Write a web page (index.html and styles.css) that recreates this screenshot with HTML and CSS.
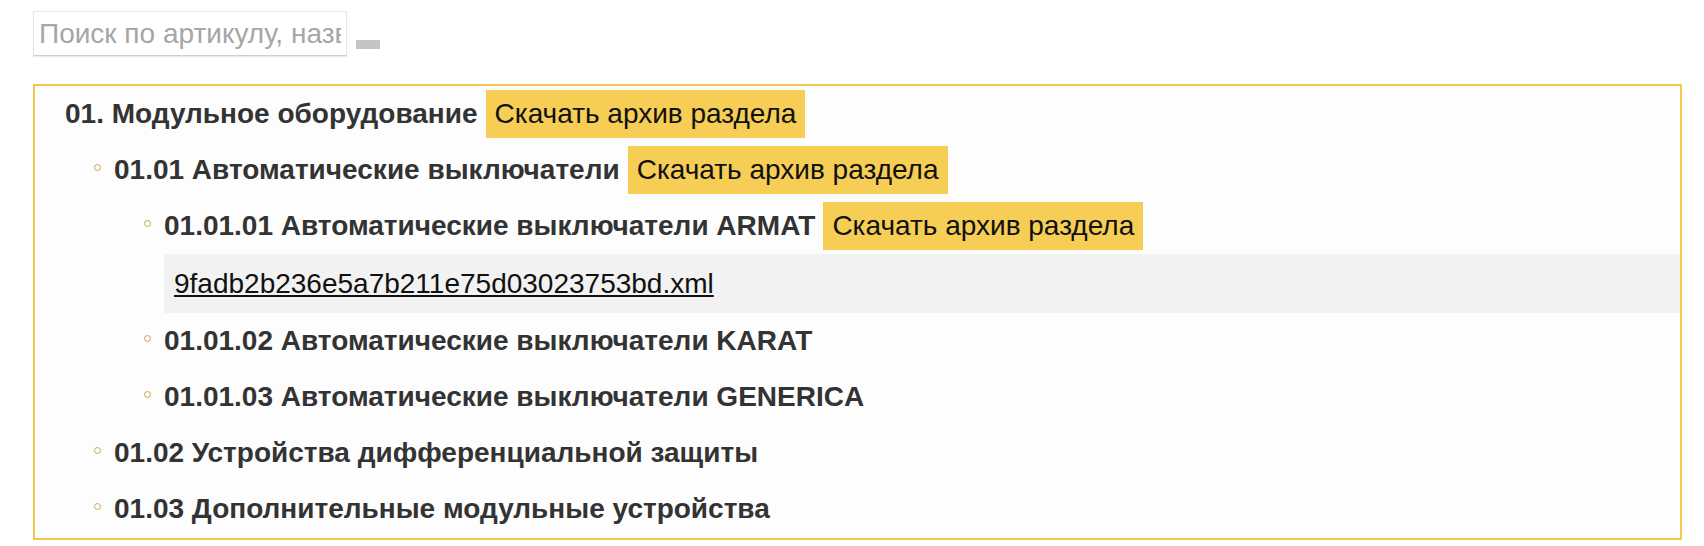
FILE: index.html
```html
<!DOCTYPE html>
<html lang="ru">
<head>
    <meta charset="UTF-8">
    <meta name="viewport" content="width=device-width, initial-scale=1.0">
    <title>Каталог</title>
    <link rel="stylesheet" href="styles.css">
</head>
<body>

<form class="search">
    <input type="text" placeholder="Поиск по артикулу, названию">
    <button type="submit"></button>
</form>

<div class="tree">
    <div class="row level-1">
        <span class="name">01. Модульное оборудование</span>
        <a class="archive" href="#">Скачать архив раздела</a>
    </div>
    <ul class="sub level-2">
        <li>
            <div class="row">
                <i class="dot"></i>
                <span class="name">01.01 Автоматические выключатели</span>
                <a class="archive" href="#">Скачать архив раздела</a>
            </div>
            <ul class="sub level-3">
                <li>
                    <div class="row">
                        <i class="dot"></i>
                        <span class="name">01.01.01 Автоматические выключатели ARMAT</span>
                        <a class="archive" href="#">Скачать архив раздела</a>
                    </div>
                    <div class="file">
                        <a href="#">9fadb2b236e5a7b211e75d03023753bd.xml</a>
                    </div>
                </li>
                <li>
                    <div class="row">
                        <i class="dot"></i>
                        <span class="name">01.01.02 Автоматические выключатели KARAT</span>
                    </div>
                </li>
                <li>
                    <div class="row">
                        <i class="dot"></i>
                        <span class="name">01.01.03 Автоматические выключатели GENERICA</span>
                    </div>
                </li>
            </ul>
        </li>
        <li>
            <div class="row">
                <i class="dot"></i>
                <span class="name">01.02 Устройства дифференциальной защиты</span>
            </div>
        </li>
        <li>
            <div class="row">
                <i class="dot"></i>
                <span class="name">01.03 Дополнительные модульные устройства</span>
            </div>
        </li>
    </ul>
</div>

</body>
</html>
```

FILE: styles.css
```css
html, body {
    overflow: hidden;
}
body {
    font-family: "Liberation Sans", Arial, sans-serif;
    margin: 0;
    padding: 11px 22px 0 33px;
    background: #fff;
}
.search {
    display: flex;
    align-items: flex-start;
    margin-bottom: 28px;
}
.search input {
    width: 314px;
    height: 45px;
    box-sizing: border-box;
    padding: 0 5px;
    font-family: inherit;
    font-size: 28px;
    color: #333;
    border: 1px solid #e6e6e6;
    border-bottom-color: #cfcfcf;
    box-shadow: 0 1px 1px rgba(0, 0, 0, 0.08);
    outline: none;
}
.search input::placeholder {
    color: #a6a6a6;
}
.search button {
    width: 24px;
    height: 9px;
    margin: 29px 0 0 9px;
    padding: 0;
    border: none;
    background: #c4c4c4;
}
.tree {
    border: 2px solid #f2c94c;
    background: #fdfdfd;
    height: 452px;
}
.row {
    display: flex;
    align-items: center;
    height: 56px;
    font-size: 28px;
}
.level-1 {
    padding-left: 30px;
}
.name {
    font-weight: bold;
    color: #333;
}
.archive {
    margin-left: 8px;
    padding: 8px 9px;
    line-height: 32px;
    background: #f6cd55;
    color: #111;
    text-decoration: none;
}
ul.sub {
    list-style: none;
    margin: 0;
}
.level-2 {
    padding-left: 59px;
}
.level-3 {
    padding-left: 50px;
}
.dot {
    width: 7px;
    height: 7px;
    box-sizing: border-box;
    border: 1.5px solid #c9a64c;
    border-radius: 50%;
    margin: 0 13px 6px 0;
}
.file {
    margin-left: 20px;
    height: 59px;
    display: flex;
    align-items: center;
    padding-left: 10px;
    background: #f2f2f2;
    font-size: 28px;
}
.file a {
    color: #111;
}
```
